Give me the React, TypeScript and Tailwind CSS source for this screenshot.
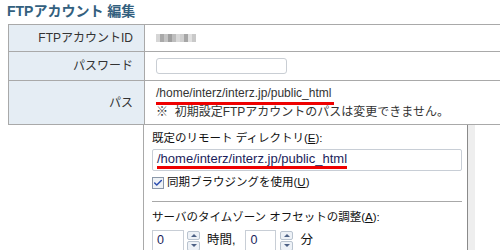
import { Check } from "lucide-react";

const jp = '"Liberation Sans", "Noto Sans CJK JP", sans-serif';

function Spin() {
  return (
    <div className="flex h-[20px] w-[13px] flex-col gap-[1px]">
      <div className="flex flex-1 items-center justify-center rounded-[2px] border border-[#b9c3cf] bg-[#eef2f7]">
        <div className="h-0 w-0 border-x-[3px] border-b-[3px] border-x-transparent border-b-[#4d6185]" />
      </div>
      <div className="flex flex-1 items-center justify-center rounded-[2px] border border-[#b9c3cf] bg-[#eef2f7]">
        <div className="h-0 w-0 border-x-[3px] border-t-[3px] border-x-transparent border-t-[#4d6185]" />
      </div>
    </div>
  );
}

function Blurred() {
  // masked account id
  const blocks = ["#d6d6d6", "#a9a9a9", "#c4c4c4", "#9f9f9f", "#bdbdbd", "#d9d9d9", "#cfcfcf", "#a6a6a6", "#e0e0e0", "#c9c9c9"];
  return (
    <div className="flex h-[8px]">
      {blocks.map((c, i) => (
        <span key={i} className="h-full w-[4px]" style={{ background: c }} />
      ))}
    </div>
  );
}

export default function App() {
  return (
    <div className="h-[250px] w-[500px] overflow-hidden bg-white" style={{ fontFamily: jp }}>
      <h1 className="h-[24px] pl-[7px] text-[14px] leading-[23px] font-bold text-[#33607e]">
        FTPアカウント 編集
      </h1>

      <div className="ml-[8px] border-t border-l border-[#a9a9a9] text-[12px] text-[#333]">
        <div className="flex h-[27px] border-b border-[#a9a9a9]">
          <div className="flex w-[136px] items-center justify-end border-r border-[#a9a9a9] bg-[#e5edf4] pr-[11px]">
            FTPアカウントID
          </div>
          <div className="flex items-center pl-[11px]">
            <Blurred />
          </div>
        </div>
        <div className="flex h-[29px] border-b border-[#a9a9a9]">
          <div className="flex w-[136px] items-center justify-end border-r border-[#a9a9a9] bg-[#e5edf4] pr-[11px]">
            パスワード
          </div>
          <div className="flex items-center pl-[11px]">
            <div className="h-[16px] w-[131px] rounded-[3px] border border-[#c9ced4] bg-white" />
          </div>
        </div>
        <div className="flex h-[44px] border-b border-[#a9a9a9]">
          <div className="flex w-[136px] items-center justify-end border-r border-[#a9a9a9] bg-[#e5edf4] pr-[11px]">
            パス
          </div>
          <div className="flex flex-col justify-center pl-[11px] leading-[15px]">
            <span className="self-start border-b-[3px] border-[#ee0000] pb-[1px] pr-[3px]">
              /home/interz/interz.jp/public_html
            </span>
            <span>※&nbsp; 初期設定FTPアカウントのパスは変更できません。</span>
          </div>
        </div>
      </div>

      <div className="flex h-[126px]">
        <div className="w-[144px] border-r border-[#a9a9a9]" />
        <div className="w-[324px] border-r border-[#8a8a8a] pl-[8px] pt-[4px] text-[11.5px] text-[#111]">
          <div className="leading-[18px]">
            既定のリモート ディレクトリ(<span className="underline">E</span>):
          </div>
          <div className="mt-[2px] flex h-[22px] w-[310px] items-center rounded-[2px] border border-[#c8ced6] pl-[4px] text-[13px] text-[#1b1e5c]">
            <span className="border-b-[3px] border-[#ee0000] leading-[15px]">
              /home/interz/interz.jp/public_html
            </span>
          </div>
          <div className="mt-[5px] flex h-[14px] items-center gap-[3px]">
            <div className="flex h-[12px] w-[12px] items-center justify-center border border-[#8a97a8] bg-[#eef2f6]">
              <Check className="h-[10px] w-[10px] text-[#2a4db0]" strokeWidth={3.5} />
            </div>
            <span>
              同期ブラウジングを使用(<span className="underline">U</span>)
            </span>
          </div>
          <div className="mt-[11px] h-px w-[310px] bg-[#a8a8a8]" />
          <div className="mt-[6px] leading-[18px]">
            サーバのタイムゾーン オフセットの調整(<span className="underline">A</span>):
          </div>
          <div className="mt-[4px] flex items-center text-[12.5px]">
            <div className="flex h-[21px] w-[32px] items-center border border-[#c8ced6] pl-[4px] text-[#1b1e5c]">0</div>
            <div className="ml-[3px]">
              <Spin />
            </div>
            <span className="ml-[7px]">時間,</span>
            <div className="ml-[10px] flex h-[21px] w-[31px] items-center border border-[#c8ced6] pl-[4px] text-[#1b1e5c]">0</div>
            <div className="ml-[4px]">
              <Spin />
            </div>
            <span className="ml-[7px]">分</span>
          </div>
        </div>
        <div className="w-[7px] bg-[#eeeeee]" />
      </div>
    </div>
  );
}
